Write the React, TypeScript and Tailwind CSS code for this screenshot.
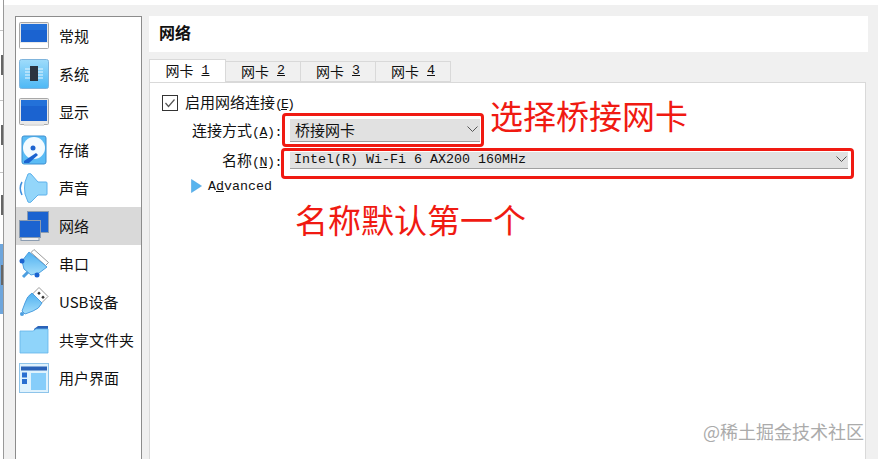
const cjk = "font-['Noto_Sans_CJK_SC','Liberation_Sans',sans-serif]";
const mono = "font-['Liberation_Mono',monospace] text-[13.33px]";

const Monitor = ({ stand }: { stand?: boolean }) => (
  <svg width="30" height="30" viewBox="0 0 30 30">
    <rect x="0.5" y="1.5" width="29" height="26" rx="1" fill="#e8e8e8" stroke="#a8a8a8" />
    <rect x="2" y="3" width="26" height={stand ? 18 : 21} fill="#1b63d0" />
    <rect x="2" y="3" width="26" height="6" fill="#2a7be0" opacity="0.6" />
    {stand ? <rect x="1" y="22" width="28" height="5" fill="#fff" /> : <path d="M5 27h20v2H5z" fill="#ddd" />}
  </svg>
);

const Chip = () => (
  <svg width="30" height="30" viewBox="0 0 30 30">
    <defs>
      <linearGradient id="chipBg" x1="0" y1="0" x2="0" y2="1">
        <stop offset="0" stopColor="#9fdcfb" />
        <stop offset="1" stopColor="#4db8f5" />
      </linearGradient>
    </defs>
    <rect x="0.5" y="0.5" width="29" height="29" rx="2" fill="url(#chipBg)" stroke="#7fb4dc" />
    <path d="M6 10h18M6 13h18M6 16h18M6 19h18" stroke="#e6f6ff" strokeWidth="1" />
    <rect x="11" y="7" width="8" height="15" fill="#2b3440" />
  </svg>
);

const Disk = () => (
  <svg width="30" height="30" viewBox="0 0 30 30">
    <rect x="3" y="1" width="24" height="28" rx="2" fill="#5bbcf5" stroke="#3d8fd0" />
    <circle cx="15" cy="13" r="11" fill="#f4fbff" />
    <circle cx="14" cy="13" r="2.5" fill="#1b63d0" />
    <path d="M5 26l12-8 2 2-9 8H5z" fill="#1b63d0" />
  </svg>
);

const Speaker = () => (
  <svg width="30" height="30" viewBox="0 0 30 30">
    <path d="M3 9Q-0.5 15 3 22" fill="none" stroke="#3f8fdc" strokeWidth="1.5" />
    <path d="M6 9L9 1q2-1 3 0l7 8h8a1 1 0 0 1 1 1v11a1 1 0 0 1-1 1h-8l-7 7q-1 1-3 0L6 21q-1-6 0-12z" fill="#93d6fa" stroke="#5cb0ea" />
  </svg>
);

const Network = () => (
  <svg width="30" height="30" viewBox="0 0 30 30">
    <rect x="8.5" y="0.5" width="21" height="21" fill="#1b63d0" stroke="#8a9bb0" />
    <rect x="0.5" y="9.5" width="21" height="17" fill="#1b63d0" stroke="#8a9bb0" />
    <rect x="2" y="26.5" width="18" height="3" fill="#eee" stroke="#8a9bb0" />
  </svg>
);

const Serial = () => (
  <svg width="30" height="30" viewBox="0 0 30 30">
    <defs>
      <linearGradient id="serialBg" x1="0" y1="0" x2="0" y2="1">
        <stop offset="0" stopColor="#4fb0f0" />
        <stop offset="1" stopColor="#a4defb" />
      </linearGradient>
    </defs>
    <path d="M15 0.5l14.5 13-3 3L12 3.5z" fill="#fff" stroke="#9a9a9a" />
    <path d="M10 3l18 15-8 6-8 2-7-6-2-8z" fill="url(#serialBg)" stroke="#4d9fe0" />
    <circle cx="3" cy="12" r="2.5" fill="#1b63d0" />
    <circle cx="18" cy="26" r="2.5" fill="#1b63d0" />
    <path d="M9 23l-5 5" stroke="#4d9fe0" strokeWidth="3" />
  </svg>
);

const Usb = () => (
  <svg width="30" height="30" viewBox="0 0 30 30">
    <defs>
      <linearGradient id="usbBg" x1="0" y1="0" x2="0" y2="1">
        <stop offset="0" stopColor="#4fb0f0" />
        <stop offset="1" stopColor="#a4defb" />
      </linearGradient>
    </defs>
    <path d="M20 0.5l9 9-7 7-9-9z" fill="#fff" stroke="#9a9a9a" />
    <rect x="19" y="5" width="2.5" height="2.5" fill="#333" transform="rotate(45 20 6)" />
    <rect x="23" y="9" width="2.5" height="2.5" fill="#333" transform="rotate(45 24 10)" />
    <path d="M13 6l10 10q-3 6-9 8l-8 3-3-3 3-8q2-7 7-10z" fill="url(#usbBg)" stroke="#4d9fe0" />
    <circle cx="3" cy="27" r="2" fill="#4d9fe0" />
  </svg>
);

const Folder = () => (
  <svg width="30" height="30" viewBox="0 0 30 30">
    <path d="M15 4l4-3h10v6H15z" fill="#2a62b8" />
    <path d="M1 6h13l3-2h12v24H1z" fill="#8fd4fa" stroke="#62b4ea" strokeWidth="0.8" />
  </svg>
);

const Ui = () => (
  <svg width="30" height="30" viewBox="0 0 30 30">
    <rect x="0.5" y="0.5" width="29" height="29" fill="#dff2fd" stroke="#8ec4ea" />
    <rect x="2" y="3.5" width="26" height="4" fill="#2a62b8" />
    <rect x="3" y="9.5" width="5" height="5" fill="#2a6fd0" />
    <rect x="3" y="16" width="5" height="5" fill="#2a6fd0" />
    <rect x="12" y="10" width="15" height="17" fill="#86cdfa" />
  </svg>
);

const items = [
  { label: "常规", icon: <Monitor stand /> },
  { label: "系统", icon: <Chip /> },
  { label: "显示", icon: <Monitor /> },
  { label: "存储", icon: <Disk /> },
  { label: "声音", icon: <Speaker /> },
  { label: "网络", icon: <Network />, active: true },
  { label: "串口", icon: <Serial /> },
  { label: "USB设备", icon: <Usb /> },
  { label: "共享文件夹", icon: <Folder /> },
  { label: "用户界面", icon: <Ui /> },
];

const Chevron = () => (
  <svg width="11" height="7" viewBox="0 0 11 7" className="shrink-0">
    <path d="M0.5 0.5L5.5 5.5L10.5 0.5" fill="none" stroke="#555" />
  </svg>
);

// cut-off strokes of the window behind the dialog
const Tick = () => <div className="w-[2px] h-[20px] ml-[1px] bg-[#666] shrink-0" />;

const App = () => {
  return (
    <div className={`relative w-[878px] h-[459px] overflow-hidden bg-[#f0f0f0] text-[15px] text-[#111] flex ${cjk}`}>
      {/* sliver of the window behind */}
      <div className="w-[3px] h-full bg-white flex flex-col shrink-0">
        <div className="h-[31px] border-b border-[#c4c4c4] shrink-0" />
        <div className="mt-[24px]"><Tick /></div>
        <div className="h-[1px] bg-[#c4c4c4] mt-[25px] shrink-0" />
        <div className="mt-[24px]"><Tick /></div>
        <div className="h-[1px] bg-[#c4c4c4] mt-[27px] shrink-0" />
        <div className="mt-[22px]"><Tick /></div>
        <div className="h-[70px] bg-[#6fa6dc] mt-[29px] pt-[21px] shrink-0"><Tick /></div>
      </div>
      <div className="w-[1px] h-full bg-[#999] shrink-0" />

      <div className="flex-1 flex flex-col">
        <div className="h-[5px] bg-white shrink-0" />
        <div className="flex h-[454px] pl-[11px] pt-[11px]">
          {/* sidebar */}
          <div className="w-[127px] h-[443px] bg-white border border-[#8c8c8c] border-b-0 flex flex-col shrink-0">
            {items.map((item) => (
              <div
                key={item.label}
                className={`flex items-center h-[38px] pl-[3px] gap-[10px] shrink-0 ${item.active ? "bg-[#d9d9d9]" : ""}`}
              >
                {item.icon}
                <span className="text-[15px] leading-none whitespace-nowrap pb-[2px]">{item.label}</span>
              </div>
            ))}
          </div>

          {/* main */}
          <div className="ml-[7px] w-[719px] flex flex-col">
            <div className="h-[36px] bg-white flex items-center pl-[10px] pb-[3px] font-bold text-[16px]">网络</div>

            <div className="flex items-end h-[22px] mt-[8px] relative z-10">
              <div className="w-[77px] h-[23px] bg-white border border-[#d9d9d9] border-b-0 flex items-center justify-center gap-[8px] text-[14px]">
                网卡 <span className={`${mono} underline`}>1</span>
              </div>
              {["2", "3", "4"].map((n) => (
                <div key={n} className="w-[75px] h-[21px] bg-[#f0f0f0] border border-[#d9d9d9] border-l-0 flex items-center justify-center gap-[8px] text-[14px]">
                  网卡 <span className={`${mono} underline`}>{n}</span>
                </div>
              ))}
            </div>

            <div className="relative w-[717px] h-[378px] bg-white border border-[#d9d9d9] border-b-0 pt-[12px] pl-[12px]">
              <div className="flex items-center h-[16px]">
                <div className="w-[16px] h-[16px] border border-[#333] flex items-center justify-center">
                  <svg width="12" height="12" viewBox="0 0 12 12">
                    <path d="M1.5 6L4.5 9.5L10.5 2.5" fill="none" stroke="#555" strokeWidth="1.2" />
                  </svg>
                </div>
                <span className="ml-[7px] leading-none whitespace-nowrap">
                  启用网络连接<span className={`${mono} tracking-[-2px]`}>(<span className="underline">E</span>)</span>
                </span>
              </div>

              <div className="flex items-center h-[23px] mt-[8px]">
                <div className="w-[120px] text-right leading-none whitespace-nowrap">
                  连接方式<span className={`${mono} tracking-[-0.5px]`}>(<span className="underline">A</span>):</span>
                </div>
                <div className="w-[190px] h-[23px] ml-[8px] pl-[5px] pr-[2px] bg-[#e1e1e1] border-b border-[#a0a0a0] flex items-center justify-between">
                  <span className="leading-none">桥接网卡</span>
                  <Chevron />
                </div>
              </div>

              <div className="flex items-center h-[17px] mt-[10px]">
                <div className="w-[120px] text-right leading-none whitespace-nowrap">
                  名称<span className={`${mono} tracking-[-0.5px]`}>(<span className="underline">N</span>):</span>
                </div>
                <div className={`w-[558px] h-[17px] ml-[8px] pl-[4px] pr-[1px] bg-[#e1e1e1] border-b border-[#a0a0a0] flex items-center justify-between ${mono}`}>
                  <span className="leading-none whitespace-pre">Intel(R) Wi-Fi 6 AX200 160MHz</span>
                  <Chevron />
                </div>
              </div>

              <div className="flex items-center h-[14px] mt-[10px] ml-[29px]">
                <svg width="11" height="14" viewBox="0 0 11 14">
                  <path d="M0.5 0.5L10.5 7L0.5 13.5z" fill="#58b4ee" stroke="#3f9ade" strokeWidth="0.5" />
                </svg>
                <span className={`ml-[6px] pt-[1px] leading-none ${mono}`}>
                  A<span className="underline">d</span>vanced
                </span>
              </div>

              {/* annotations */}
              <div className="absolute left-[132px] top-[30px] w-[202px] h-[34px] border-[3px] border-[#f01a12] rounded-[4px]" />
              <div className="absolute left-[131px] top-[65px] w-[573px] h-[31px] border-[3px] border-[#f01a12] rounded-[4px]" />
              <div className="absolute left-[340px] top-[11px] text-[33px] leading-[42px] text-[#f01a12] whitespace-nowrap">选择桥接网卡</div>
              <div className="absolute left-[145px] top-[115px] text-[33px] leading-[42px] text-[#f01a12] whitespace-nowrap">名称默认第一个</div>
              <div className="absolute left-[553px] top-[336px] text-[18px] leading-[24px] text-[#ababab] whitespace-nowrap">@稀土掘金技术社区</div>
            </div>
          </div>
        </div>
      </div>
    </div>
  );
};

export default App;
